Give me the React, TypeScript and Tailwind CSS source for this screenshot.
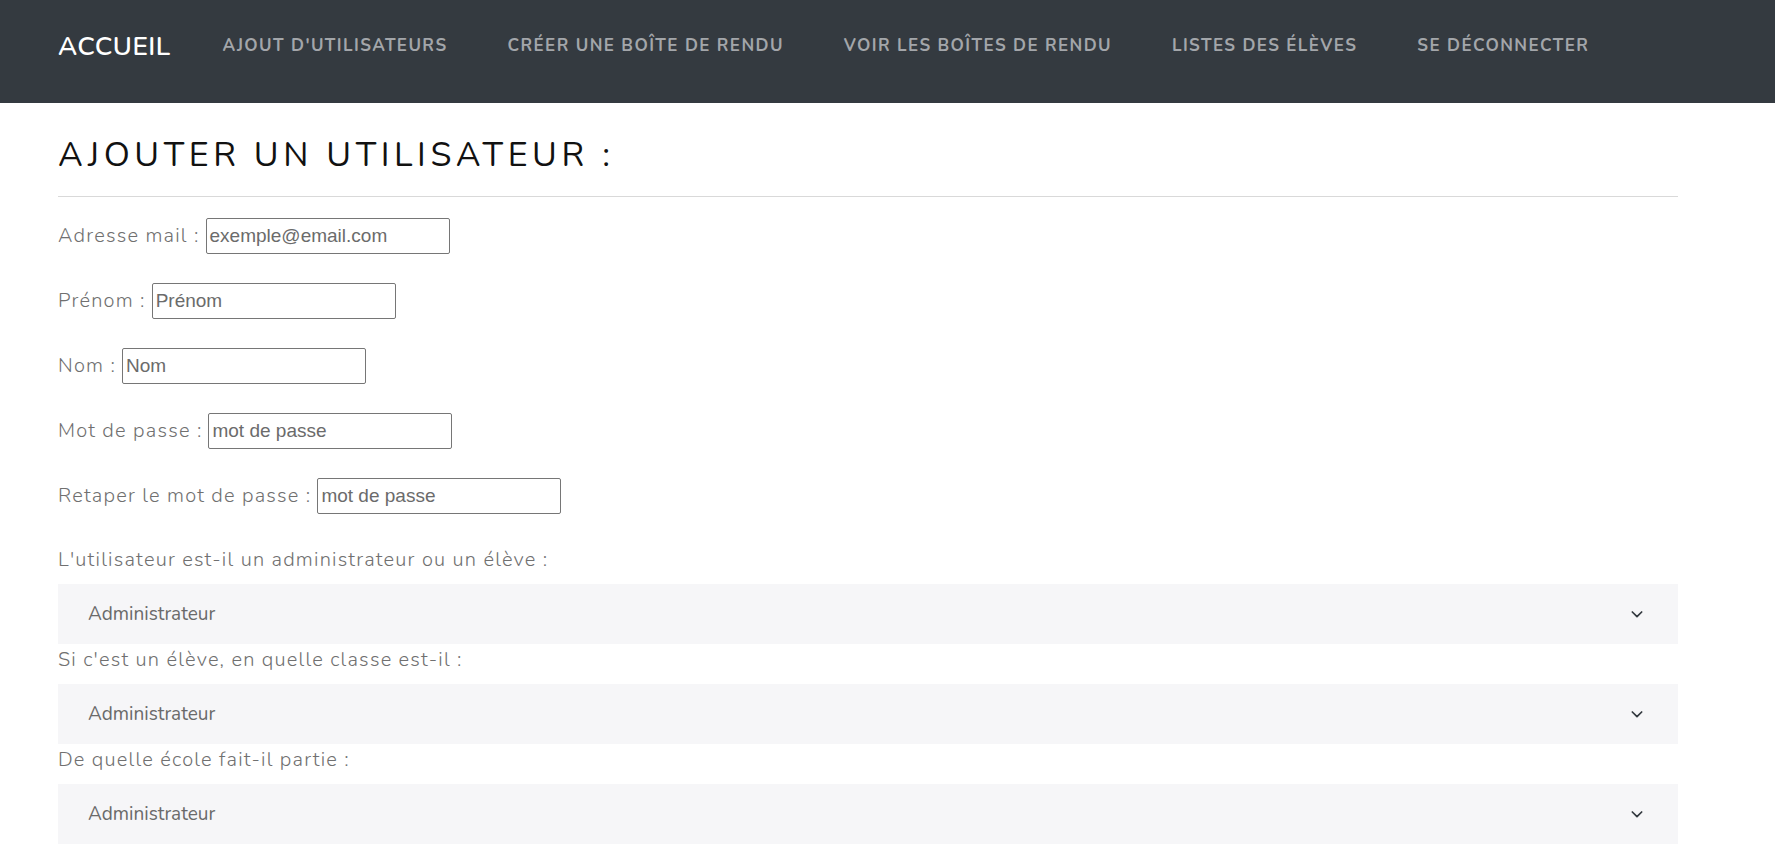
import React from "react";

const navLinks = [
  "AJOUT D'UTILISATEURS",
  "CRÉER UNE BOÎTE DE RENDU",
  "VOIR LES BOÎTES DE RENDU",
  "LISTES DES ÉLÈVES",
  "SE DÉCONNECTER",
];

const fields = [
  { label: "Adresse mail :", ph: "exemple@email.com" },
  { label: "Prénom :", ph: "Prénom" },
  { label: "Nom :", ph: "Nom" },
  { label: "Mot de passe :", ph: "mot de passe" },
  { label: "Retaper le mot de passe :", ph: "mot de passe" },
];

const selects = [
  "L'utilisateur est-il un administrateur ou un élève :",
  "Si c'est un élève, en quelle classe est-il :",
  "De quelle école fait-il partie :",
];

function Chevron() {
  return (
    <svg width="16" height="16" viewBox="0 0 24 24" fill="none" stroke="#343a40" strokeWidth="2.6" strokeLinecap="round" strokeLinejoin="round">
      <path d="M5 9l7 7 7-7" />
    </svg>
  );
}

export default function App() {
  return (
    <div className="min-h-screen bg-white font-['Nunito','Lato',sans-serif]">
      <nav className="h-[103px] bg-[#343a40] flex items-center pl-[58px] pb-[11px]">
        <span className="text-white text-[26px] font-semibold tracking-[0.5px] mr-[52px]">ACCUEIL</span>
        <div className="flex gap-[60px]">
          {navLinks.map((l) => (
            <span key={l} className="text-[#a3a6aa] text-[17px] font-bold tracking-[1.4px]">
              {l}
            </span>
          ))}
        </div>
      </nav>
      <main className="pl-[58px] pr-[97px]">
        <h1 className="text-[34px] leading-none tracking-[0.135em] text-[#111] pt-[35px] pb-[24px]">
          AJOUTER UN UTILISATEUR :
        </h1>
        <div className="h-px bg-[#d9d9d9]" />
        <div className="pt-[21px] flex flex-col gap-[29px]">
          {fields.map((f) => (
            <div key={f.label} className="flex items-center h-[36px]">
              <span className="text-[#707070] text-[20px] font-light tracking-[1.2px] mr-[6px]">{f.label}</span>
              <div className="w-[244px] h-[36px] border border-[#767676] rounded-[2px] flex items-center px-[3px] text-[19px] text-[#6b6b6b] font-['Liberation_Sans',sans-serif]">
                {f.ph}
              </div>
            </div>
          ))}
        </div>
        <div className="pt-[30px] flex flex-col">
          {selects.map((s) => (
            <div key={s} className="flex flex-col">
              <div className="h-[32px] flex items-center text-[#707070] text-[20px] font-light tracking-[1.2px]">{s}</div>
              <div className="mt-[8px] h-[60px] bg-[#f6f6f8] flex items-center justify-between pl-[30px] pr-[33px] text-[#6a6a6a] text-[19px]">
                <span>Administrateur</span>
                <Chevron />
              </div>
            </div>
          ))}
        </div>
      </main>
    </div>
  );
}
